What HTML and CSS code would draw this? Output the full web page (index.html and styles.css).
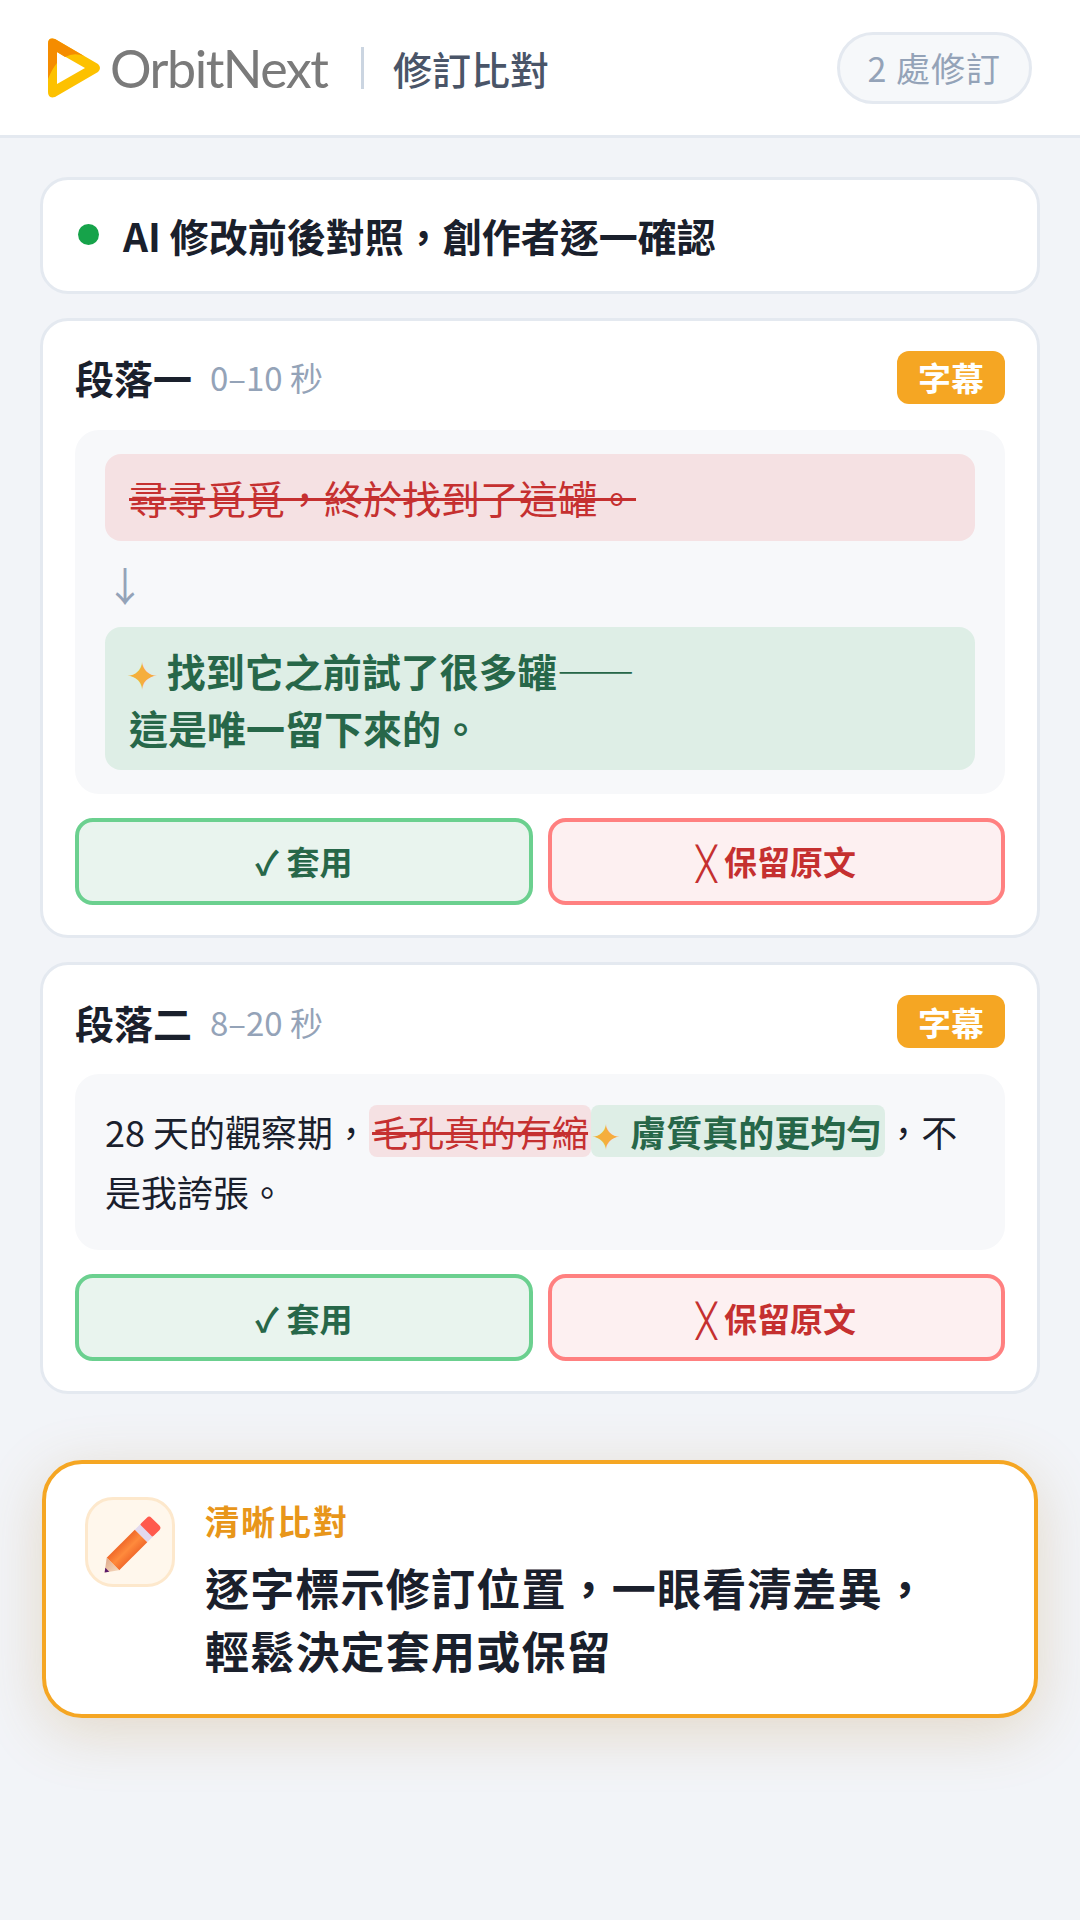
FILE: index.html
```html
<!DOCTYPE html>
<html lang="zh-Hant">
<head>
<meta charset="utf-8">
<title>修訂比對</title>
<link rel="stylesheet" href="styles.css">
</head>
<body>
<header class="topbar">
  <div class="brand">
    <svg class="logo-mark" viewBox="0 0 53 60" width="53" height="60" aria-hidden="true">
      <path d="M7 1 L50 26 Q54 30 50 34 L7 59 Q0 61 0 54 L0 6 Q0 -1 7 1 Z M9 14 L9 46 L37 30 Z" fill="#fdc100" fill-rule="evenodd"/>
      <path d="M7 1 L36 18 Q26 14 17 19 L9 14 L9 25 Q4 31 0 41 L0 6 Q0 -1 7 1 Z" fill="#f58c00"/>
    </svg>
    <span class="wordmark">OrbitNext</span>
    <span class="divider"></span>
    <h1 class="page-title">修訂比對</h1>
  </div>
  <div class="count-pill">2 處修訂</div>
</header>
<main class="content">
  <section class="card status">
    <span class="status-dot"></span>
    <span class="status-text">AI 修改前後對照，創作者逐一確認</span>
  </section>

  <section class="card segment">
    <div class="seg-head">
      <div class="seg-title"><b>段落一</b><span class="seg-time">0–10 秒</span></div>
      <span class="badge">字幕</span>
    </div>
    <div class="panel panel-stack">
      <div class="old-box"><del>尋尋覓覓，終於找到了這罐。</del></div>
      <div class="arrow">↓</div>
      <div class="new-box"><span class="spark">✦</span> 找到它之前試了很多罐——<br>這是唯一留下來的。</div>
    </div>
    <div class="actions">
      <button class="btn apply">✓ 套用</button>
      <button class="btn keep"><span class="x-mark">╳</span> 保留原文</button>
    </div>
  </section>

  <section class="card segment">
    <div class="seg-head">
      <div class="seg-title"><b>段落二</b><span class="seg-time">8–20 秒</span></div>
      <span class="badge">字幕</span>
    </div>
    <div class="panel panel-inline">
      <p class="inline-text">28 天的觀察期，<del class="inline-old">毛孔真的有縮</del><span class="inline-new"><span class="spark">✦</span> 膚質真的更均勻</span>，不是我誇張。</p>
    </div>
    <div class="actions">
      <button class="btn apply">✓ 套用</button>
      <button class="btn keep"><span class="x-mark x-alt">╳</span> 保留原文</button>
    </div>
  </section>

  <aside class="callout">
    <div class="callout-icon">
      <svg viewBox="0 0 56 56" width="60" height="60" aria-hidden="true">
        <defs>
          <linearGradient id="pencil-body" x1="0" y1="0" x2="1" y2="0">
            <stop offset="0" stop-color="#f06a2a"/><stop offset="0.5" stop-color="#ff8a3c"/><stop offset="1" stop-color="#f26b2c"/>
          </linearGradient>
          <linearGradient id="pencil-tip" x1="0" y1="0" x2="1" y2="0">
            <stop offset="0" stop-color="#dfa98a"/><stop offset="1" stop-color="#f6d9bd"/>
          </linearGradient>
        </defs>
        <g transform="rotate(45 28 28)">
          <rect x="19.750" y="-5.500" width="16.500" height="13.500" rx="3" fill="#ff5a4d"/>
          <rect x="19.750" y="6.500" width="16.500" height="7" fill="#e2d9ee"/>
          <rect x="19.750" y="13.500" width="16.500" height="37" fill="url(#pencil-body)"/>
          <path d="M19.750 50.500 L36.250 50.500 L28 61.500 Z" fill="url(#pencil-tip)"/>
          <path d="M25.400 58 L30.600 58 L28 61.500 Z" fill="#5b1a6b"/>
        </g>
      </svg>
    </div>
    <div class="callout-body">
      <div class="callout-label">清晰比對</div>
      <div class="callout-main">逐字標示修訂位置，一眼看清差異，<br>輕鬆決定套用或保留</div>
    </div>
  </aside>
</main>
</body>
</html>
```
FILE: styles.css
```css
* { box-sizing: border-box; }
html, body { margin: 0; padding: 0; }
body {
  width: 1080px;
  height: 1920px;
  overflow: hidden;
  background: #f2f4f8;
  font-family: "Noto Sans CJK TC", "Noto Sans", sans-serif;
  color: #1a202c;
}
.topbar {
  height: 138px;
  background: #fff;
  border-bottom: 3px solid #e4e9f0;
  display: flex;
  align-items: center;
  justify-content: space-between;
  padding: 0 48px;
}
.brand { display: flex; align-items: center; }
.logo-mark { display: block; margin-right: 9px; }
.wordmark {
  font-family: "Lato", sans-serif;
  font-weight: 400;
  font-size: 52px;
  letter-spacing: -1.500px;
  line-height: 60px;
  color: #7a7a7a;
  width: 219px;
}
.divider { width: 3px; height: 42px; background: #cbd5e1; margin: 0 29px 0 32px; }
.page-title { margin: 0; font-size: 39px; font-weight: 500; color: #4a5568; line-height: 50px; }
.count-pill {
  height: 72px;
  padding: 0 28px;
  border: 3px solid #e4e9f0;
  border-radius: 36px;
  background: #f6f8fa;
  color: #94a3b8;
  font-size: 34px;
  letter-spacing: 1px;
  display: flex;
  align-items: center;
}
.content {
  padding: 39px 40px 0;
  display: flex;
  flex-direction: column;
  gap: 24px;
}
.card {
  background: #fff;
  border: 3px solid #e4e9f0;
  border-radius: 28px;
}
.status {
  height: 116.550px;
  display: flex;
  align-items: center;
  padding: 0 35px;
  gap: 24px;
}
.status-dot { width: 21px; height: 21px; border-radius: 50%; background: #16a34a; margin-bottom: 2px; }
.status-text { font-size: 39px; font-weight: 700; line-height: 50px; color: #1a202c; }
.segment { padding: 30px 32px; }
.seg-head { display: flex; justify-content: space-between; align-items: center; height: 53.850px; margin-bottom: 26px; }
.seg-title { display: flex; align-items: center; gap: 18px; }
.seg-title b { font-size: 39px; font-weight: 700; line-height: 54px; }
.seg-time { font-size: 33px; color: #94a3b8; }
.badge {
  width: 108px;
  height: 53.850px;
  border-radius: 12px;
  background: #f5a623;
  color: #fff;
  font-size: 33px;
  font-weight: 700;
  display: flex;
  align-items: center;
  justify-content: center;
}
.panel { background: #f7f8fa; border-radius: 24px; }
.panel-stack { padding: 24px 30px; }
.old-box {
  background: #f5e1e3;
  border-radius: 16px;
  padding: 15px 24px;
  font-size: 39px;
  line-height: 1.45;
  color: #c53030;
}
.old-box del { text-decoration-thickness: 3px; }
.arrow { height: 86.050px; font-size: 40px; line-height: 86px; color: #94a3b8; }
.new-box {
  background: #deeee6;
  border-radius: 16px;
  padding: 15px 24px;
  font-size: 39px;
  font-weight: 700;
  line-height: 1.45;
  color: #276749;
}
.spark { color: #f5ae3d; font-size: 1em; font-weight: 400; line-height: 0; vertical-align: -3px; margin: 0 -1px 0 -3px; }
.inline-new .spark { margin-right: 1px; }
.actions { display: grid; grid-template-columns: 1fr 1fr; gap: 15px; margin-top: 24px; }
.btn {
  height: 86.500px;
  border-radius: 18px;
  font-family: inherit;
  font-size: 33px;
  font-weight: 700;
  padding: 0;
}
.x-mark { font-family: "DejaVu Sans Mono", monospace; }
.x-alt { font-family: "Liberation Mono", monospace; }
.apply { background: #e9f4ee; border: 4px solid #6bd08f; color: #276749; }
.keep { background: #fdf0f1; border: 4px solid #ff8080; color: #c53030; }
.panel-inline { padding: 27px 24px 29px 30px; }
.inline-text { margin: 0; font-size: 36px; line-height: 60px; }
.inline-old {
  background: #f5e1e3;
  color: #c53030;
  border-radius: 8px;
  padding: 0 3px;
  text-decoration-thickness: 3px;
}
.inline-new {
  background: #deeee6;
  color: #276749;
  border-radius: 8px;
  padding: 0 3px;
  font-weight: 700;
}
.callout {
  margin: 42px 2px 0;
  height: 258.500px;
  background: #fff;
  border: 4px solid #f5a623;
  border-radius: 40px;
  box-shadow: 0 14px 60px rgba(180, 130, 50, 0.24);
  display: flex;
  padding: 33px 39px;
  gap: 30px;
}
.callout-icon {
  flex: none;
  width: 90px;
  height: 90px;
  border-radius: 28px;
  background: #fff7ec;
  border: 3px solid #fde8cc;
  display: flex;
  align-items: center;
  justify-content: center;
}
.callout-icon svg { display: block; margin: 11px 1px 0 0; overflow: visible; }
.callout-body { padding-top: 2px; }
.callout-label { font-size: 34px; font-weight: 700; color: #e8961a; letter-spacing: 2px; line-height: 44px; }
.callout-main { font-size: 44px; font-weight: 700; letter-spacing: 1.200px; line-height: 63px; color: #1a202c; margin-top: 13px; }
```
